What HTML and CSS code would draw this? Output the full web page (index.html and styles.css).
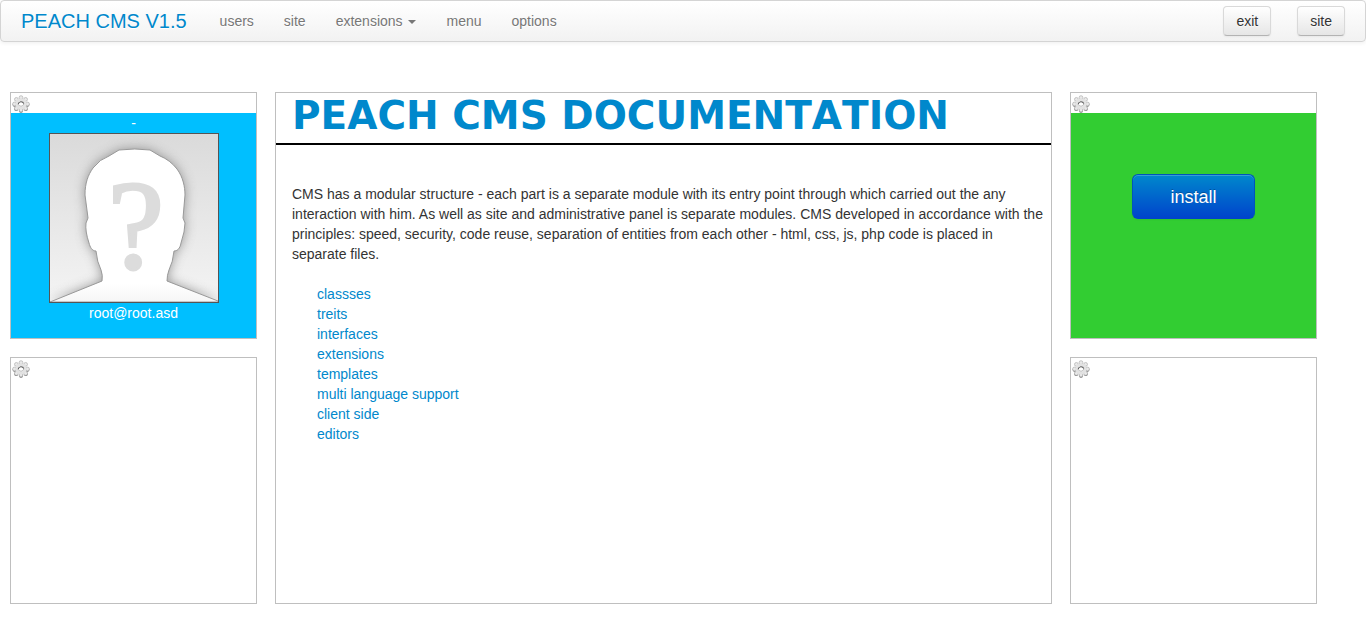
FILE: index.html
```
<!DOCTYPE html>
<html lang="en">
<head>
<meta charset="utf-8">
<title>Peach CMS</title>
<link rel="stylesheet" href="styles.css">
</head>
<body>
<svg class="defs" aria-hidden="true">
  <defs>
    <symbol id="gear" viewBox="0 0 18 18">
      <g fill="#666">
        <circle cx="9" cy="15.8" r="2"/><circle cx="4.2" cy="14" r="2"/><circle cx="13.8" cy="14" r="2"/>
        <circle cx="2.6" cy="9.8" r="2"/><circle cx="15.4" cy="9.8" r="2"/>
      </g>
      <g fill="#e9e9e9" stroke="#b0b0b0" stroke-width=".7">
        <circle cx="9" cy="2.6" r="1.9"/><circle cx="4.4" cy="4.4" r="1.9"/><circle cx="13.6" cy="4.4" r="1.9"/>
        <circle cx="2.5" cy="9" r="1.9"/><circle cx="15.5" cy="9" r="1.9"/>
        <circle cx="4.4" cy="13.4" r="1.9"/><circle cx="13.6" cy="13.4" r="1.9"/><circle cx="9" cy="15" r="1.9"/>
      </g>
      <circle cx="9" cy="8.9" r="5.6" fill="#e2e2e2"/>
      <circle cx="9" cy="8.9" r="2.8" fill="#fff"/>
      <path d="M6.2 9.2A2.9 2.9 0 0 1 11.8 8.6" fill="none" stroke="#555" stroke-width="1.1"/>
      <path d="M6.2 9.2A2.9 2.9 0 0 0 11.8 9" fill="none" stroke="#aaa" stroke-width=".8"/>
    </symbol>
  </defs>
</svg>

<header class="navbar">
  <a class="brand" href="#">PEACH CMS V1.5</a>
  <nav class="nav">
    <a href="#">users</a>
    <a href="#">site</a>
    <a href="#">extensions <span class="caret"></span></a>
    <a href="#">menu</a>
    <a href="#">options</a>
  </nav>
  <div class="actions">
    <button class="btn" type="button">exit</button>
    <button class="btn" type="button">site</button>
  </div>
</header>

<div class="layout">
  <aside class="column">
    <section class="widget">
      <button class="settings" type="button" aria-label="settings"><svg><use href="#gear"/></svg></button>
      <div class="widget-body profile">
        <span>-</span>
        <svg class="avatar" viewBox="0 0 170 170" role="img" aria-label="avatar">
          <defs>
            <linearGradient id="backdrop" x1="0" y1="0" x2="0" y2="1">
              <stop offset="0" stop-color="#dadada"/>
              <stop offset="1" stop-color="#f4f4f4"/>
            </linearGradient>
            <linearGradient id="skin" x1="0" y1="0" x2="0" y2="1">
              <stop offset=".88" stop-color="#fff"/>
              <stop offset="1" stop-color="#f6f6f6"/>
            </linearGradient>
            <filter id="soft" x="-20%" y="-20%" width="140%" height="140%"><feGaussianBlur stdDeviation="6"/></filter>
            <path id="bust" d="M1 169 53 148Q54 142 52 137 48 129 47 118C43 118 41 114 40 110Q36 98 37 90L39 85 36 62C36 50 39 42 44 35Q51 26 60 23L70 17Q86 15 101 17L111 23Q121 27 128 36C134 44 136 54 136 62L134 85 136 90Q136 98 132 110C131 116 128 118 125 118Q124 129 120 137 118 142 118 148L169 168V169Z"/>
          </defs>
          <rect width="170" height="170" fill="url(#backdrop)"/>
          <use href="#bust" fill="#777" opacity=".75" filter="url(#soft)"/>
          <use href="#bust" fill="url(#skin)" stroke="#999" stroke-width="1"/>
          <text class="unknown" x="87" y="135" text-anchor="middle">?</text>
          <rect x=".5" y=".5" width="169" height="169" fill="none" stroke="#555"/>
        </svg>
        <span>root@root.asd</span>
      </div>
    </section>
    <section class="widget">
      <button class="settings" type="button" aria-label="settings"><svg><use href="#gear"/></svg></button>
    </section>
  </aside>

  <main class="content">
    <h1 class="title">PEACH CMS DOCUMENTATION</h1>
    <div class="article">
      <p>CMS has a modular structure - each part is a separate module with its entry point through which carried out the any interaction with him. As well as site and administrative panel is separate modules. CMS developed in accordance with the principles: speed, security, code reuse, separation of entities from each other - html, css, js, php code is placed in separate files.</p>
      <ul class="topics">
        <li><a href="#">classses</a></li>
        <li><a href="#">treits</a></li>
        <li><a href="#">interfaces</a></li>
        <li><a href="#">extensions</a></li>
        <li><a href="#">templates</a></li>
        <li><a href="#">multi language support</a></li>
        <li><a href="#">client side</a></li>
        <li><a href="#">editors</a></li>
      </ul>
    </div>
  </main>

  <aside class="column">
    <section class="widget">
      <button class="settings" type="button" aria-label="settings"><svg><use href="#gear"/></svg></button>
      <div class="widget-body installer">
        <button class="btn-primary" type="button">install</button>
      </div>
    </section>
    <section class="widget">
      <button class="settings" type="button" aria-label="settings"><svg><use href="#gear"/></svg></button>
    </section>
  </aside>
</div>
</body>
</html>
```
FILE: styles.css
```
* {
  box-sizing: border-box;
}

body {
  margin: 0;
  background: #fff;
  color: #333;
  font: 14px/20px "Liberation Sans", Arial, sans-serif;
}

a {
  color: #08c;
  text-decoration: none;
}

button {
  font-family: inherit;
  cursor: pointer;
}

.defs {
  position: absolute;
  width: 0;
  height: 0;
}

.navbar {
  display: flex;
  align-items: center;
  height: 42px;
  padding: 0 20px;
  border: 1px solid #d4d4d4;
  border-radius: 4px;
  background: linear-gradient(#fff, #f2f2f2);
  box-shadow: 0 1px 4px rgba(0, 0, 0, 0.07);
}

.brand {
  padding-right: 18px;
  font-size: 20px;
  text-shadow: 0 1px 0 #fff;
}

.nav {
  display: flex;
}

.nav a {
  padding: 10px 15px;
  color: #777;
  text-shadow: 0 1px 0 #fff;
}

.caret {
  display: inline-block;
  margin-left: 2px;
  border: 4px solid transparent;
  border-top-color: #777;
  border-bottom: 0;
  vertical-align: middle;
}

.actions {
  display: flex;
  gap: 26px;
  margin-left: auto;
}

.btn {
  padding: 4px 12px;
  border: 1px solid #ccc;
  border-color: #d9d9d9 #d9d9d9 #b3b3b3;
  border-radius: 4px;
  background: linear-gradient(#fff, #e6e6e6);
  box-shadow: inset 0 1px 0 rgba(255, 255, 255, 0.2), 0 1px 2px rgba(0, 0, 0, 0.05);
  color: #333;
  font-size: 14px;
  line-height: 20px;
  text-shadow: 0 1px 1px rgba(255, 255, 255, 0.75);
}

.layout {
  display: flex;
  gap: 18px;
  padding: 50px 49px 15px 10px;
}

.column {
  display: flex;
  flex: 0 0 247px;
  flex-direction: column;
  gap: 18px;
}

.widget {
  display: flex;
  flex-direction: column;
  align-items: flex-start;
  height: 247px;
  border: 1px solid #bfbfbf;
}

.settings {
  flex: none;
  height: 20px;
  padding: 2px 1px 0;
  border: 0;
  background: none;
}

.settings svg {
  display: block;
  width: 18px;
  height: 18px;
}

.widget-body {
  display: flex;
  flex: 1;
  flex-direction: column;
  align-items: center;
  align-self: stretch;
}

.profile {
  background: #00bfff;
  color: #fff;
}

.avatar {
  display: block;
  width: 170px;
  height: 170px;
}

.unknown {
  fill: #dcdcdc;
  stroke: #dcdcdc;
  stroke-width: 3px;
  font: 126px "Liberation Serif", serif;
}

.installer {
  padding-top: 61px;
  background: #32cd32;
}

.btn-primary {
  padding: 12px 37px 10px;
  border: 1px solid;
  border-color: #05b #05b #04c;
  border-radius: 6px;
  background: linear-gradient(#08c, #04c);
  box-shadow: inset 0 1px 0 rgba(255, 255, 255, 0.2), 0 1px 2px rgba(0, 0, 0, 0.05);
  color: #fff;
  font-size: 18px;
  line-height: 21px;
  text-shadow: 0 -1px 0 rgba(0, 0, 0, 0.25);
}

.content {
  flex: 1;
  min-width: 0;
  border: 1px solid #bfbfbf;
}

.title {
  margin: 0;
  padding: 3px 16px 7px;
  border-bottom: 2px solid #000;
  color: #08c;
  font: bold 39px/40px "DejaVu Sans", Verdana, sans-serif;
  font-kerning: none;
}

.article {
  padding: 39px 0 0 16px;
}

.article p {
  margin: 0 0 20px;
}

.topics {
  margin: 0;
  padding: 0 0 0 25px;
  list-style: none;
}
```
